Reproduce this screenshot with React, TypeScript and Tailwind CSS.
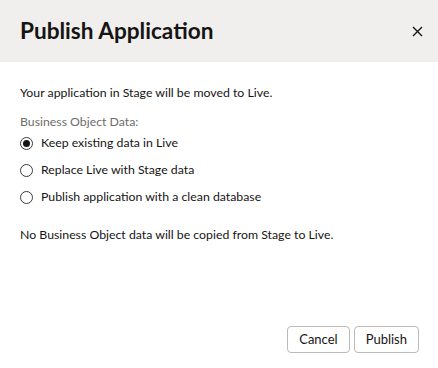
import { useState } from "react";

const options = [
    "Keep existing data in Live",
    "Replace Live with Stage data",
    "Publish application with a clean database",
];

export default function App() {
    const [choice, setChoice] = useState(0);

    return (
        <div className="w-[438px] h-[368px] bg-white flex flex-col text-[#161513] font-['Lato',sans-serif]">
            {/* Header */}
            <div className="h-[62px] shrink-0 bg-[#f1efed] flex items-center justify-between pl-5 pr-[9px]">
                <h1 className="text-[22.6px] font-bold leading-none">Publish Application</h1>
                <button className="w-6 h-6 flex items-center justify-center">
                    <svg width="11" height="11" viewBox="0 0 11 11" fill="none" stroke="#161513" strokeWidth="1.4">
                        <path d="M1 1L10 10M10 1L1 10" />
                    </svg>
                </button>
            </div>

            {/* Body */}
            <div className="flex-1 px-5 pt-[22px] text-[12.3px] leading-[18px]">
                <p>Your application in Stage will be moved to Live.</p>
                <div className="mt-[11px] text-[#6f6c69]">Business Object Data:</div>
                <div className="flex flex-col gap-[9px] mt-[3px]">
                    {options.map((o, i) => (
                        <label key={o} className="flex items-center gap-[8px] cursor-pointer" onClick={() => setChoice(i)}>
                            <span className="w-[13px] h-[13px] rounded-full border border-[#3d3b39] flex items-center justify-center">
                                {choice === i && <span className="w-[7px] h-[7px] rounded-full bg-[#161513]" />}
                            </span>
                            <span>{o}</span>
                        </label>
                    ))}
                </div>
                <p className="mt-[20px]">No Business Object data will be copied from Stage to Live.</p>
            </div>

            {/* Footer */}
            <div className="flex justify-end gap-1 px-[19px] pb-[15px]">
                <button className="h-[27px] px-[11px] rounded border border-[#bdbab7] bg-white text-[13px]">Cancel</button>
                <button className="h-[27px] px-[11px] rounded border border-[#bdbab7] bg-white text-[13px]">Publish</button>
            </div>
        </div>
    );
}
